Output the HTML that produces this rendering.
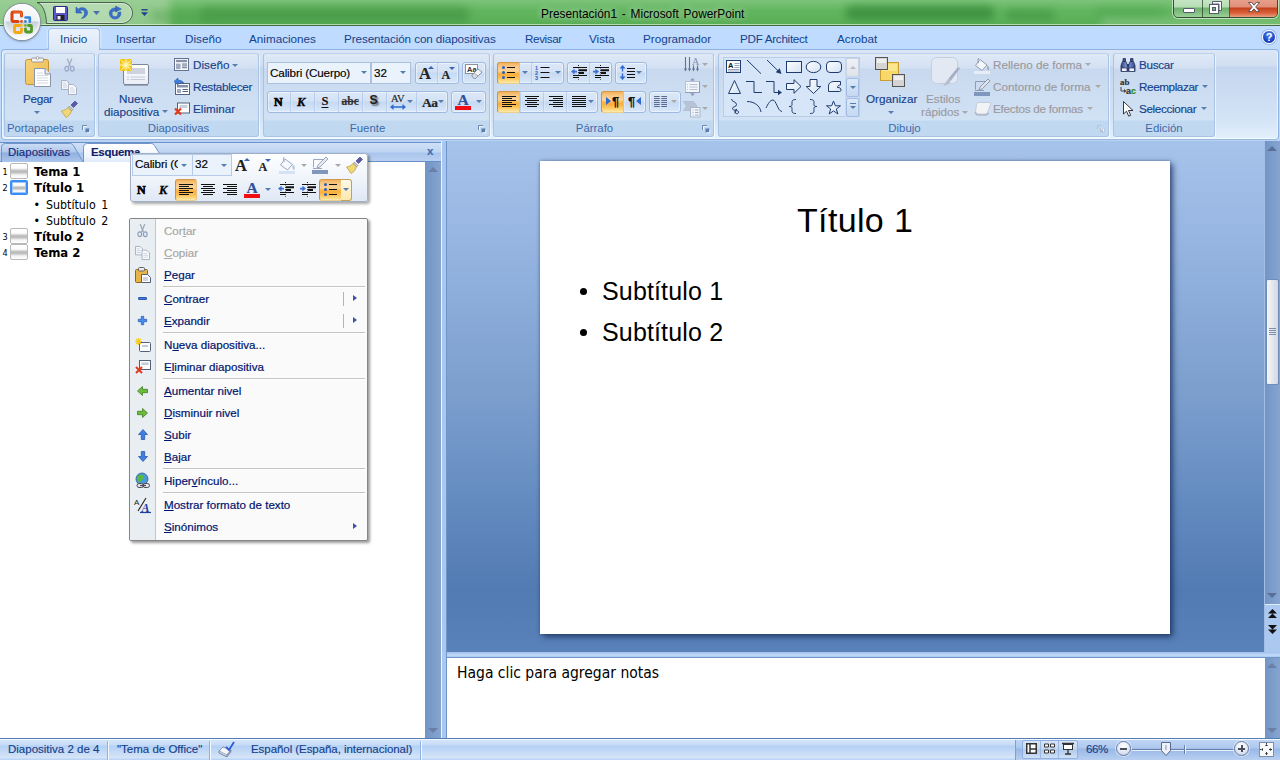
<!DOCTYPE html>
<html lang="es">
<head>
<meta charset="utf-8">
<title>Presentación1 - Microsoft PowerPoint</title>
<style>
html,body{margin:0;padding:0}
body{width:1280px;height:760px;overflow:hidden;position:relative;background:#bfdbff;font-family:"Liberation Sans",sans-serif;font-size:12px;color:#15428b;line-height:1}
.a{position:absolute}
.t{position:absolute;white-space:nowrap;line-height:14px;height:14px}
svg{position:absolute;overflow:visible}
/* title bar */
#titlebar{left:0;top:0;width:1280px;height:26px;background:linear-gradient(180deg,#7cc379 0%,#63b660 40%,#57ad54 100%);overflow:hidden}
#titlebar .blob{position:absolute;border-radius:8px;filter:blur(4px)}
#tabsrow{left:0;top:26px;width:1280px;height:24px;background:#bfdbff}
/* ribbon */
#ribbon{left:1px;top:49px;width:1276px;height:89px;border:1px solid #8db2e3;border-bottom-color:#9db7dc;border-radius:4px;background:linear-gradient(180deg,#dbe7f5 0,#d0dff2 16px,#c4d6ee 17px,#d4e4f7 70px,#e3f0fd 89px);box-shadow:inset 0 -1px 0 #edfbff,inset 1px 0 0 #e8f6ff,inset -1px 0 0 #e8f6ff}
.grp{position:absolute;top:53px;height:82px;border:1px solid #a9c3e4;border-top-color:#bfd2ec;border-radius:3px;background:linear-gradient(180deg,#dfe9f6 0,#d3e0f3 14px,#c8d9ef 15px,#d2e2f5 66px,#c1d8f1 67px,#c1d8f1 100%);box-shadow:1px 1px 0 rgba(255,255,255,.6)}
.grp .lbl{position:absolute;left:0;right:0;bottom:0;height:16px;line-height:17px;text-align:center;color:#3e6aaa;font-size:11.4px}
/* work area */
#work{left:0;top:140px;width:1280px;height:599px;background:#b9d2f3}
#leftpane{left:0;top:162px;width:426px;height:577px;background:#fff}
#stage{left:447px;top:141px;width:818px;height:511px;background:linear-gradient(180deg,#a6c3eb 0%,#96b5e1 20%,#7b9ecd 50%,#5f87bd 75%,#527bb3 88%,#5982ba 100%)}
#slide{left:540px;top:161px;width:630px;height:473px;background:#fff;box-shadow:0 0 3px rgba(30,50,90,.45),3px 3px 6px rgba(20,40,85,.7)}
#notes{left:447px;top:658px;width:818px;height:81px;background:#fff}
#status{left:0;top:739px;width:1280px;height:21px;background:linear-gradient(180deg,#d7e6f9 0,#c7dcf8 6px,#b3d0f5 7px,#d7e5f7 19px,#bad4f7 20px)}

.r{position:absolute;white-space:nowrap;line-height:14px;height:14px;font-size:11.7px;color:#15428b;-webkit-text-stroke:.15px currentColor}
.dis{color:#9a999e}
.dd{position:absolute;width:0;height:0;border-left:3px solid transparent;border-right:3px solid transparent;border-top:3px solid #567db1}
.dd.g{border-top-color:#aba9a8}
.bg{position:absolute;height:20px;border:1px solid #9ebae1;border-radius:3px;background:linear-gradient(180deg,#dce8f7 0,#d4e2f5 9px,#c6d9f1 10px,#d9e8fa 20px);box-shadow:inset 0 0 0 1px rgba(255,255,255,.45)}
.bg i{position:absolute;top:0;width:1px;height:20px;background:linear-gradient(180deg,#c4d6ef,#aec6e8 50%,#c4d6ef);border-right:1px solid rgba(255,255,255,.5)}
.hot{position:absolute;height:20px;border:1px solid;border-color:#d09a4a #e8c07a #ecd08a #c99448;border-radius:3px 0 0 3px;background:linear-gradient(180deg,#f3b05a 0,#f8c57f 3px,#fbd49a 8px,#fbb84f 10px,#fbae38 12px,#fcc966 16px,#fdeaa9 20px)}
.lines{position:absolute;width:14px}
.lines b{display:block;height:1px;background:#111;margin-bottom:1px}
.launch{position:absolute;top:125px;width:8px;height:8px}

.sic{position:absolute;left:10px;width:16px;height:14px;border:1px solid #b8b8b8;border-radius:2px;background:linear-gradient(180deg,#fff 0,#fbfbfb 30%,#bdbdbd 48%,#bdbdbd 60%,#f4f4f4 78%,#fff 100%)}
.sic.sel{border:2px solid #3a8df5;left:10px;width:14px;height:11px;border-radius:2px;top:180px!important;box-shadow:inset 0 0 0 1px #9cc8fb}

#menu{left:129px;top:218px;width:237px;height:321px;border:1px solid #868686;border-radius:2px;background:#fafafa;box-shadow:2px 2px 3px rgba(0,0,0,.4)}
#menu .col{position:absolute;left:0;top:0;width:25px;height:321px;background:#e9eef3;border-right:1px solid #c5c5c5;border-radius:1px 0 0 1px}
#menu .sep{position:absolute;left:33px;right:2px;height:1px;background:#c5c5c5;box-shadow:0 1px 0 #fff}
.m{position:absolute;left:164px;white-space:nowrap;line-height:14px;height:14px;font-size:11.600px;color:#00156e;-webkit-text-stroke:.2px currentColor}
.m.d{color:#a7a7a7}
.m u{text-decoration:underline;text-underline-offset:1px}
.sub{position:absolute;left:353px;width:0;height:0;border-top:3.500px solid transparent;border-bottom:3.500px solid transparent;border-left:4px solid #3d52a4}
</style>
</head>
<body>
<div class="a" id="titlebar">
<div class="blob" style="left:-30px;top:-8px;width:200px;height:40px;background:#a3d19d;opacity:.75"></div>
<div class="blob" style="left:200px;top:7px;width:270px;height:16px;background:#3f9040;opacity:.6"></div>
<div class="blob" style="left:150px;top:10px;width:60px;height:12px;background:#4a9a48;opacity:.4"></div>
<div class="blob" style="left:845px;top:6px;width:150px;height:14px;background:#368a3a;opacity:.8"></div>
<div class="blob" style="left:1005px;top:10px;width:50px;height:10px;background:#3f9242;opacity:.7"></div>
<div class="blob" style="left:1095px;top:8px;width:70px;height:14px;background:#4ea650;opacity:.6"></div>
<div class="blob" style="left:1100px;top:18px;width:200px;height:10px;background:#8cc888;opacity:.7"></div>
<div class="a" style="left:0;top:25px;width:1280px;height:1px;background:#44693f"></div>
<div class="a" style="left:0;top:24px;width:1280px;height:1px;background:rgba(235,250,232,.62)"></div>
<div class="t" style="left:541px;top:7px;color:#000;font-size:11.900px;word-spacing:1.500px;text-shadow:0 0 6px rgba(255,255,255,.55),0 0 10px rgba(255,255,255,.4)">Presentación1 - Microsoft PowerPoint</div>
<!-- quick access toolbar -->
<svg style="left:30px;top:0" width="110" height="25" viewBox="30 0 110 25"><path d="M37 2.500C42.500 4 46 12 46.500 23.500H122A10.500 10.500 0 0 0 122 2.500Z" fill="rgba(255,255,255,.3)" stroke="rgba(50,70,55,.8)" stroke-width="1"/><path d="M40 3.500H122A9.500 9.500 0 0 1 122 22.500H47.500" fill="none" stroke="rgba(255,255,255,.35)" stroke-width="1"/></svg>
<svg style="left:53px;top:6px" width="15" height="15" viewBox="0 0 15 15"><rect x=".5" y=".5" width="14" height="14" rx="1" fill="#5a55c8" stroke="#2d2a86"/><rect x="3" y="1" width="9" height="6" fill="#fff"/><rect x="3.5" y="9" width="8" height="5" fill="#222"/><rect x="4.5" y="10" width="3" height="3.5" fill="#e8e8f8"/></svg>
<svg style="left:75px;top:6px" width="14" height="14" viewBox="0 0 14 14"><path d="M1 1 L1 7 L7 7 L4.8 4.8 C7.2 3 10.2 4.6 9.6 8 C9.2 10 7.8 11.4 6.4 12.4 C10.2 12 13 9.4 12.4 5.8 C11.6 1.6 6.4 .4 3.2 3.2 Z" fill="#3a6fd0" stroke="#2a56a8" stroke-width=".6"/></svg>
<svg style="left:93px;top:11px" width="7" height="4" viewBox="0 0 7 4"><path d="M0 0h7L3.5 4z" fill="#4a6fb0"/></svg>
<svg style="left:108px;top:6px" width="14" height="14" viewBox="0 0 14 14"><path d="M7.6 0 L7.6 6 L13.4 3 Z M9 2.2 C4 .8 .6 4.6 1.4 8.6 C2.2 12.6 7 14.4 10.4 12 C13 10.2 13.2 7.4 12.6 5.8 L9.8 6.6 C10.4 8.4 9.6 9.8 8.4 10.4 C6.4 11.4 4.2 10 4 8 C3.8 5.8 6 4.4 8.4 5 Z" fill="#3a6fd0" stroke="#2a56a8" stroke-width=".5"/></svg>
<svg style="left:140.500px;top:8.500px" width="7" height="8" viewBox="0 0 8 9"><rect x=".5" y="0" width="7" height="1.6" fill="#1f3f8f"/><path d="M0 3.6h8L4 8z" fill="#1f3f8f"/></svg>
<!-- window controls -->
<div class="a" style="left:1173px;top:-5px;width:103px;height:21px;border:1px solid rgba(40,50,40,.8);border-radius:0 0 5px 5px;box-shadow:0 0 0 1px rgba(255,255,255,.55);overflow:hidden">
 <div class="a" style="left:0;top:0;width:28px;height:21px;background:linear-gradient(180deg,rgba(255,255,255,.6) 0,rgba(255,255,255,.5) 11px,rgba(120,170,120,.55) 12px,rgba(200,230,200,.5) 21px);border-right:1px solid rgba(40,60,40,.7)"></div>
 <div class="a" style="left:29px;top:0;width:26px;height:21px;background:linear-gradient(180deg,rgba(255,255,255,.6) 0,rgba(255,255,255,.5) 11px,rgba(120,170,120,.55) 12px,rgba(200,230,200,.5) 21px);border-right:1px solid rgba(40,60,40,.7)"></div>
 <div class="a" style="left:56px;top:0;width:47px;height:21px;background:linear-gradient(180deg,#e9a995 0,#e08f78 11px,#c4401c 12px,#d9603a 17px,#e8a080 21px)"></div>
 <div class="a" style="left:9px;top:12px;width:10px;height:3px;background:#fff;border:1px solid #555c70;border-radius:1px"></div>
 <svg style="left:35px;top:5px" width="13" height="13" viewBox="0 0 13 13"><path d="M3.5 .5h9v9h-2.5v-6.5h-6.5z" fill="#fff" stroke="#555c70"/><rect x=".5" y="3.5" width="9" height="9" fill="#fff" stroke="#555c70"/><rect x="3.5" y="6.500" width="3" height="3" fill="#7aa87a" stroke="#555c70"/></svg>
 <svg style="left:74px;top:6px" width="12" height="10" viewBox="0 0 12 10"><path d="M.5 .5h3.2L6 3.200 8.300 .5h3.200L7.700 5l3.800 4.500H8.300L6 6.800 3.700 9.500H.5L4.300 5z" fill="#fff" stroke="#5a4a50" stroke-width=".9"/></svg>
</div>
</div>
<div class="a" id="tabsrow">
<div class="a" style="left:48px;top:2px;width:50px;height:22px;border:1px solid #a3c0e8;border-bottom:none;border-radius:4px 4px 0 0;background:linear-gradient(180deg,#eaf2fc,#dde8f6);box-shadow:0 0 2px 1px #d9e9fd"></div>
<div class="t" style="left:60px;top:6px;font-size:11.7px">Inicio</div>
<div class="t" style="left:116px;top:6px;font-size:11.7px">Insertar</div>
<div class="t" style="left:185px;top:6px;font-size:11.7px">Diseño</div>
<div class="t" style="left:249px;top:6px;font-size:11.7px">Animaciones</div>
<div class="t" style="left:344px;top:6px;font-size:11.7px;letter-spacing:-.1px">Presentación con diapositivas</div>
<div class="t" style="left:525px;top:6px;font-size:11.7px;letter-spacing:-.4px">Revisar</div>
<div class="t" style="left:589px;top:6px;font-size:11.7px">Vista</div>
<div class="t" style="left:643px;top:6px;font-size:11.7px">Programador</div>
<div class="t" style="left:740px;top:6px;font-size:11.7px;letter-spacing:-.3px">PDF Architect</div>
<div class="t" style="left:837px;top:6px;font-size:11.7px">Acrobat</div>
<div class="a" style="left:1262px;top:4px;width:12px;height:12px;border-radius:50%;background:radial-gradient(circle at 50% 30%,#5d8df0,#1a44c4 60%,#1230a0);border:1px solid #fff;box-shadow:0 0 0 1px #9fb8e8;color:#fff;font-weight:bold;font-size:11px;line-height:12px;text-align:center">?</div>
</div>
<!-- office button -->
<div class="a" style="left:4px;top:4px;width:36px;height:36px;border-radius:50%;background:linear-gradient(180deg,#fdfdfe 0,#eef0f4 46%,#c9d0dc 50%,#e4e8ef 75%,#fff 100%);box-shadow:0 0 0 1px #8a94a6,0 1px 3px rgba(0,0,0,.5),inset 0 0 3px 1px rgba(255,255,255,.9)"></div>
<svg style="left:4px;top:4px" width="36" height="36" viewBox="4 4 36 36" fill="none" stroke-linecap="round" stroke-linejoin="round">
<path d="M21.500 16v-2.500a1.500 1.500 0 0 0-1.500-1.500h-6.500a1.500 1.500 0 0 0-1.500 1.500v6.500a1.500 1.500 0 0 0 1.500 1.500h4.500" stroke="#d8420c" stroke-width="3"/>
<path d="M21.500 16v-2.500a1.500 1.500 0 0 0-1.500-1.500h-6.500" stroke="#f0702c" stroke-width="1.200"/>
<path d="M25.500 17.500h4.300v4.300" stroke="#2f86dc" stroke-width="2.600"/>
<path d="M20 25.500h-4.500a1 1 0 0 0-1 1v5a1 1 0 0 0 1 1h5a1 1 0 0 0 1-1v-2.500" stroke="#f4a814" stroke-width="2.800"/>
<path d="M25.500 29v2a1 1 0 0 0 1 1h4a1 1 0 0 0 1-1v-4.500a1 1 0 0 0-1-1h-2" stroke="#4f9a28" stroke-width="2.800"/>
<circle cx="21.500" cy="21.500" r="1.400" fill="#e8501c"/><circle cx="25.400" cy="21.500" r="1.400" fill="#2f86dc"/><circle cx="21.500" cy="25.400" r="1.400" fill="#f6b432"/><circle cx="25.400" cy="25.400" r="1.400" fill="#6cb23a"/>
</svg>
<div class="a" id="ribbon"></div>
<div class="a" style="left:49px;top:49px;width:50px;height:2px;background:#dde8f6"></div>
<div class="a" style="left:46px;top:47px;width:3px;height:3px;border-radius:0 0 3px 0;border-right:1px solid #a3c0e8;border-bottom:1px solid #a3c0e8;box-sizing:border-box"></div>
<div class="a" style="left:99px;top:47px;width:3px;height:3px;border-radius:0 0 0 3px;border-left:1px solid #a3c0e8;border-bottom:1px solid #a3c0e8;box-sizing:border-box"></div>
<!-- ===== ribbon groups ===== -->
<div class="grp" style="left:4px;width:89px"><div class="lbl" style="text-align:left;padding-left:2px;letter-spacing:-.05px">Portapapeles</div></div>
<div class="grp" style="left:98px;width:159px"><div class="lbl" style="padding-right:0">Diapositivas</div></div>
<div class="grp" style="left:263px;width:225px"><div class="lbl" style="padding-right:18px">Fuente</div></div>
<div class="grp" style="left:493px;width:219px"><div class="lbl" style="padding-right:18px">Párrafo</div></div>
<div class="grp" style="left:718px;width:389px"><div class="lbl" style="padding-right:18px">Dibujo</div></div>
<div class="grp" style="left:1113px;width:100px"><div class="lbl">Edición</div></div>
<!--G1-->
<svg style="left:24px;top:56px" width="28" height="32" viewBox="0 0 28 32">
<defs><linearGradient id="cb" x1="0" y1="0" x2="1" y2="1"><stop offset="0" stop-color="#f7d27c"/><stop offset="1" stop-color="#eeb94e"/></linearGradient></defs>
<rect x="1.500" y="3.500" width="23" height="25" rx="2" fill="url(#cb)" stroke="#c2943a"/>
<rect x="7.500" y="2" width="12" height="4" rx="1" fill="#f2f2f2" stroke="#8c8c8c" stroke-width=".8"/><circle cx="13.500" cy="2" r="1.400" fill="#fff" stroke="#8c8c8c" stroke-width=".7"/>
<path d="M10.500 12.500h10.500l5.500 5.500v12.500h-16z" fill="#fdfdfe" stroke="#8a96a8"/><path d="M21 12.500v5.500h5.500" fill="#e4e9f1" stroke="#8a96a8"/>
<path d="M13 17h6M13 19.500h11M13 22h11M13 24.500h11M13 27h11" stroke="#d0d6e0" stroke-width=".9"/></svg>
<div class="r" style="left:23px;top:92px;letter-spacing:-.3px">Pegar</div>
<div class="dd" style="left:34px;top:111px"></div>
<svg style="left:64px;top:58px" width="11" height="15" viewBox="0 0 12 16"><path d="M3.500 .5L7 9M8.500 .5L5 9" stroke="#a9b2c4" stroke-width="1.500" fill="none"/><ellipse cx="3" cy="11.500" rx="2" ry="2.600" fill="none" stroke="#9aa8c8" stroke-width="1.400"/><ellipse cx="9" cy="11.500" rx="2" ry="2.600" fill="none" stroke="#9aa8c8" stroke-width="1.400"/></svg>
<svg style="left:61px;top:80px" width="16" height="15" viewBox="0 0 16 15"><path d="M.5 .5h5l2.500 2.500v6.500h-7.500z" fill="#f4f6fa" stroke="#a6b0c2"/><path d="M7.500 4.500h5l3 3v7h-8z" fill="#fafbfd" stroke="#a6b0c2"/><path d="M9 8h4M9 10h5M9 12h5M2 3h3M2 5h4M2 7h4" stroke="#c2cad8" stroke-width=".8"/></svg>
<svg style="left:61px;top:100px" width="18" height="18" viewBox="0 0 18 18"><path d="M10 5l4-4 2.500 2.500-4 4z" fill="#5c5aa8" stroke="#3c3a80" stroke-width=".6"/><path d="M8.500 6l3.500 3.500-1.500 1.500-3.500-3.500z" fill="#c8c8d0" stroke="#777" stroke-width=".5"/><path d="M7 7.500l3.500 3.500c-1 3-3 5.500-5.500 6.500l-4.500-6.500c2.500-.5 5-1.500 6.500-3.500z" fill="#f0d878" stroke="#b89a30" stroke-width=".7"/></svg>
<svg class="launch" style="left:82px" viewBox="0 0 8 8"><path d="M.5 5V.5H5" fill="none" stroke="#6f88b0"/><path d="M1.500 5V1.500H5" fill="none" stroke="#fff" stroke-opacity=".8"/><path d="M3.500 3.500h4v4h-4z" fill="#5c7cb0"/><path d="M4.500 7.800h3.300V4.500" fill="none" stroke="#fff" stroke-width=".9"/></svg>
<!--G2-->
<svg style="left:119px;top:57px" width="32" height="30" viewBox="0 0 32 30">
<defs><radialGradient id="sun"><stop offset="0" stop-color="#fffef0"/><stop offset=".35" stop-color="#fbe46a"/><stop offset="1" stop-color="#f1c40f"/></radialGradient><linearGradient id="sl" x1="0" y1="0" x2="0" y2="1"><stop offset="0" stop-color="#ffffff"/><stop offset="1" stop-color="#e9edf5"/></linearGradient></defs>
<rect x="4.500" y="7.500" width="25" height="20" rx="1.500" fill="url(#sl)" stroke="#7b869a"/><path d="M5 28.500h24" stroke="#9aa4b8" stroke-width="1"/><rect x="8" y="11" width="18" height="6" fill="#cfd3df"/><path d="M8 20h2M11.500 20h14.500M8 22.500h2M11.500 22.500h14.500" stroke="#c4cad8" stroke-width="1"/>
<rect x="1" y="2" width="12" height="12" fill="url(#sun)"/><path d="M7 2v12M1 8h12M1.500 2.500l11 11M12.500 2.500l-11 11" stroke="#fff8c0" stroke-width=".9" opacity=".9"/></svg>
<div class="r" style="left:119px;top:92px">Nueva</div>
<div class="r" style="left:104px;top:105px">diapositiva</div>
<div class="dd" style="left:162px;top:110px"></div>
<svg style="left:174px;top:58px" width="15" height="13" viewBox="0 0 16 14"><rect x=".5" y=".5" width="15" height="13" fill="#fdfdfe" stroke="#5a6a8a"/><rect x="2" y="2" width="12" height="2.500" fill="#8692aa"/><rect x="2" y="6" width="5" height="6" fill="#a0aac0"/><path d="M8.500 6.500h5.500M8.500 8.500h5.500M8.500 10.500h5.500" stroke="#54627c"/></svg>
<div class="r" style="left:193px;top:58px">Diseño</div><div class="dd" style="left:232px;top:64px"></div>
<svg style="left:174px;top:78px" width="17" height="18" viewBox="0 0 17 18"><rect x="1.500" y="5.500" width="14" height="11" fill="#fdfdfe" stroke="#54627c"/><rect x="3" y="7" width="11" height="2.500" fill="#8692aa"/><rect x="3" y="11" width="4" height="4" fill="#a0aac0"/><path d="M8.500 11.500h5.500M8.500 13.500h5.500" stroke="#54627c"/><path d="M0 3.500l4-3.500v2.200c3 0 5 1 6 3.500-2-1.300-3.500-1.500-6-1.200v2.500z" fill="#3f7fe0" stroke="#1f4fb0" stroke-width=".6"/></svg>
<div class="r" style="left:193px;top:80px;letter-spacing:-.3px">Restablecer</div>
<svg style="left:174px;top:101px" width="17" height="17" viewBox="0 0 17 17"><rect x="3.500" y="2" width="12" height="10" fill="#fdfdfe" stroke="#54627c"/><rect x="5.500" y="4" width="8" height="3" fill="#c8cfdc"/><path d="M1 7.500l6 6M7 7.500l-6 6" stroke="#e03a1c" stroke-width="2.200"/></svg>
<div class="r" style="left:193px;top:102px">Eliminar</div>
<!--G3 Fuente-->
<div class="a" style="left:267px;top:62px;width:102px;height:20px;border:1px solid #abc1de;background:#eaf2fb"></div>
<div class="r" style="left:270px;top:66px;color:#000;letter-spacing:-.15px">Calibri (Cuerpo)</div><div class="dd" style="left:361px;top:71px"></div>
<div class="a" style="left:371px;top:62px;width:38px;height:20px;border:1px solid #abc1de;background:#eaf2fb"></div>
<div class="r" style="left:374px;top:66px;color:#000">32</div><div class="dd" style="left:400px;top:71px"></div>
<div class="bg" style="left:415px;top:62px;width:42px"><i style="left:21px"></i></div>
<div class="r" style="left:419px;top:65px;font:bold 16.500px/18px 'Liberation Serif',serif;color:#222;height:18px">A</div>
<div class="a" style="left:428px;top:66px;width:0;height:0;border-left:3px solid transparent;border-right:3px solid transparent;border-bottom:3px solid #3a62b0"></div>
<div class="r" style="left:441.500px;top:68px;font:bold 12px/14px 'Liberation Serif',serif;color:#222">A</div>
<div class="a" style="left:449px;top:67px;width:0;height:0;border-left:3px solid transparent;border-right:3px solid transparent;border-top:3px solid #3a62b0"></div>
<div class="bg" style="left:462px;top:62px;width:22px"></div>
<svg style="left:465px;top:64px" width="18" height="16" viewBox="0 0 18 16"><rect x=".5" y=".5" width="12" height="9" fill="#fff" stroke="#8a8f9c"/><text x="2" y="8" font-family="Liberation Sans, sans-serif" font-size="7.500" font-weight="bold" fill="#333">Aa</text><path d="M7 11l6-6 4 3-6 6c-1.500 1.200-3.500 0-4-3z" fill="#f4f4f8" stroke="#7a8090" stroke-width=".8"/><path d="M11 14c-1.500 1.200-3.500 0-4-3l2-2 4 3z" fill="#d8dce8" stroke="#7a8090" stroke-width=".6"/></svg>
<div class="bg" style="left:267px;top:91px;width:179px"><i style="left:22px"></i><i style="left:46px"></i><i style="left:70px"></i><i style="left:94px"></i><i style="left:118px"></i><i style="left:148px"></i></div>
<div class="r" style="left:274px;top:95px;font:bold 12px/15px 'Liberation Serif',serif;color:#000;height:15px;-webkit-text-stroke:.7px #000">N</div>
<div class="r" style="left:297px;top:95px;font:italic bold 12.500px/15px 'Liberation Serif',serif;color:#000;height:15px;-webkit-text-stroke:.3px #000">K</div>
<div class="r" style="left:321.500px;top:94px;font:bold 12.500px/15px 'Liberation Serif',serif;color:#111;height:15px;text-decoration:underline;text-underline-offset:1.500px">S</div>
<div class="r" style="left:341.500px;top:94px;font:bold 11.500px/14px 'Liberation Serif',serif;color:#333;text-decoration:line-through">abc</div>
<div class="r" style="left:369.500px;top:93px;font:bold 12.500px/15px 'Liberation Sans',sans-serif;color:#222;height:15px;text-shadow:1.500px 1.500px 1.500px rgba(0,0,0,.5)">S</div>
<div class="r" style="left:391px;top:93px;font:10.500px/12px 'Liberation Serif',serif;color:#222;letter-spacing:-.3px">AV</div>
<svg style="left:390px;top:104px" width="16" height="6" viewBox="0 0 16 6"><path d="M0 3l3.500-3v2.300h9v-2.300l3.500 3-3.500 3v-2.300h-9v2.300z" fill="#2f6ad0"/></svg>
<div class="dd" style="left:407px;top:100px"></div>
<div class="r" style="left:422px;top:95px;font:bold 13.500px/16px 'Liberation Serif',serif;color:#222;height:16px;letter-spacing:-.5px">Aa</div>
<div class="dd" style="left:438px;top:100px"></div>
<div class="bg" style="left:451px;top:91px;width:33px"></div>
<div class="r" style="left:457.500px;top:91px;font:bold 15.500px/17px 'Liberation Serif',serif;color:#2f4f9f;height:17px">A</div>
<div class="a" style="left:455px;top:106px;width:16px;height:4px;background:#f00c12"></div>
<div class="dd" style="left:476px;top:100px"></div>
<svg class="launch" style="left:478px" viewBox="0 0 8 8"><path d="M.5 5V.5H5" fill="none" stroke="#6f88b0"/><path d="M1.500 5V1.500H5" fill="none" stroke="#fff" stroke-opacity=".8"/><path d="M3.500 3.500h4v4h-4z" fill="#5c7cb0"/><path d="M4.500 7.800h3.300V4.500" fill="none" stroke="#fff" stroke-width=".9"/></svg>
<!--G4 Parrafo-->
<div class="bg" style="left:497px;top:62px;width:65px"><i style="left:33px"></i></div>
<div class="hot" style="left:497px;top:62px;width:21px"></div>
<svg style="left:501px;top:65px" width="15" height="15" viewBox="0 0 15 15"><circle cx="2.500" cy="2.500" r="1.500" fill="#2f5fc0"/><circle cx="2.500" cy="7.500" r="1.500" fill="#2f5fc0"/><circle cx="2.500" cy="12.500" r="1.500" fill="#2f5fc0"/><path d="M6 2.500h8M6 7.500h8M6 12.500h8" stroke="#111" stroke-width="1.100"/></svg>
<div class="dd" style="left:522px;top:71px"></div>
<svg style="left:535px;top:65px" width="15" height="15" viewBox="0 0 15 15"><text x="0" y="4.500" font-size="5.500" font-weight="bold" font-family="Liberation Sans, sans-serif" fill="#2f5fc0">1</text><text x="0" y="9.500" font-size="5.500" font-weight="bold" font-family="Liberation Sans, sans-serif" fill="#2f5fc0">2</text><text x="0" y="14.500" font-size="5.500" font-weight="bold" font-family="Liberation Sans, sans-serif" fill="#2f5fc0">3</text><path d="M5.500 2.500h9M5.500 7.500h9M5.500 12.500h9" stroke="#111" stroke-width="1.100"/></svg>
<div class="dd" style="left:555px;top:71px"></div>
<div class="bg" style="left:567px;top:62px;width:43px"><i style="left:21px"></i></div>
<svg style="left:571px;top:65px" width="17" height="15" viewBox="0 0 17 15"><path d="M2 2.500h14M2 10.500h14M2 12.500h6" stroke="#111" stroke-width="1"/><path d="M8 5.200h8M8 8h5" stroke="#111" stroke-width="1.900"/><path d="M7.500 0v15" stroke="#111" stroke-width="1" stroke-dasharray="1 1.400"/><path d="M0 6.600l3.600-2.800v2h2.400v1.600h-2.400v2z" fill="#3a6fd8"/></svg>
<svg style="left:593px;top:65px" width="17" height="15" viewBox="0 0 17 15"><path d="M2 2.500h14M2 10.500h14M2 12.500h6" stroke="#111" stroke-width="1"/><path d="M8 5.200h8M8 8h5" stroke="#111" stroke-width="1.900"/><path d="M7.500 0v15" stroke="#111" stroke-width="1" stroke-dasharray="1 1.400"/><path d="M6 6.600l-3.600-2.800v2h-2.400v1.600h2.400v2z" fill="#3a6fd8"/></svg>
<div class="bg" style="left:615px;top:62px;width:30px"></div>
<svg style="left:619px;top:65px" width="17" height="15" viewBox="0 0 17 15"><path d="M3.500 0l3 3.500h-2.300v3h-1.400v-3h-2.300zM3.500 15l3-3.500h-2.300v-3h-1.400v3h-2.300z" fill="#2f6ad0"/><path d="M8 3.500h8M8 6.500h8M8 9.500h8M8 12.500h8" stroke="#111" stroke-width="1.100"/></svg>
<div class="dd" style="left:636px;top:71px"></div>
<div class="bg" style="left:497px;top:91px;width:99px"><i style="left:22px"></i><i style="left:45px"></i><i style="left:68px"></i></div>
<div class="hot" style="left:497px;top:91px;width:21px"></div>
<div class="lines" style="left:502px;top:96px"><b></b><b style="width:10px"></b><b></b><b style="width:10px"></b><b></b><b style="width:10px"></b></div>
<div class="lines" style="left:525px;top:96px"><b></b><b style="width:10px;margin-left:2px"></b><b></b><b style="width:10px;margin-left:2px"></b><b></b><b style="width:10px;margin-left:2px"></b></div>
<div class="lines" style="left:549px;top:96px"><b></b><b style="width:10px;margin-left:4px"></b><b></b><b style="width:10px;margin-left:4px"></b><b></b><b style="width:10px;margin-left:4px"></b></div>
<div class="lines" style="left:572px;top:96px"><b></b><b></b><b></b><b></b><b></b><b></b></div>
<div class="dd" style="left:588px;top:100px"></div>
<div class="bg" style="left:601px;top:91px;width:43px"><i style="left:21px"></i></div>
<div class="hot" style="left:601px;top:91px;width:21px"></div>
<div class="a" style="left:606px;top:97px;width:0;height:0;border-top:4px solid transparent;border-bottom:4px solid transparent;border-left:5px solid #2f6ad0"></div>
<div class="r" style="left:612px;top:94px;font:bold 13px/15px 'Liberation Sans',sans-serif;color:#111;height:15px">¶</div>
<div class="r" style="left:628px;top:94px;font:bold 13px/15px 'Liberation Sans',sans-serif;color:#111;height:15px">¶</div>
<div class="a" style="left:636px;top:97px;width:0;height:0;border-top:4px solid transparent;border-bottom:4px solid transparent;border-right:5px solid #2f6ad0"></div>
<div class="bg" style="left:649px;top:91px;width:30px"></div>
<svg style="left:654px;top:96px" width="14" height="12" viewBox="0 0 14 12"><path d="M0 .5h5.700M7.300 .5h5.700M0 2.500h5.700M7.300 2.500h5.700M0 4.500h5.700M7.300 4.500h5.700M0 6.500h5.700M7.300 6.500h5.700M0 8.500h5.700M7.300 8.500h5.700M0 10.500h5.700M7.300 10.500h5.700" stroke="#5a6a8e" stroke-width="1.100"/></svg>
<div class="dd g" style="left:671px;top:100px"></div>
<svg style="left:684px;top:56px" width="16" height="17" viewBox="0 0 16 17"><path d="M1.500 1v13M5.500 1v13M9.500 9.500v4.500M13.500 9.500v4.500" stroke="#5f7299" stroke-width="1.100"/><path d="M0 12.500h3l-1.500 3zM4 12.500h3l-1.500 3zM8 12.500h3l-1.500 3zM12 12.500h3l-1.500 3z" fill="#5f7299"/><text x="8" y="8.500" font-size="10" font-family="Liberation Serif, serif" fill="#7f8fae">A</text></svg>
<div class="dd g" style="left:702px;top:63px"></div>
<svg style="left:684px;top:78px" width="17" height="18" viewBox="0 0 17 18"><path d="M8.500 0l2.500 2.500h-5zM8.500 18l2.500-2.500h-5z" fill="#8a9ab8"/><path d="M8.500 2v2M8.500 14v2" stroke="#8a9ab8"/><rect x="1.500" y="3.500" width="14" height="11" fill="#f3f6fb" stroke="#b4c0d4"/><path d="M1.500 14.500h14v-11" fill="none" stroke="#8a9ab8"/><path d="M3 6.500h1M5.500 6.500h8M3 9h1M5.500 9h8M3 11.500h1M5.500 11.500h8" stroke="#b0bace" stroke-width=".9"/></svg>
<div class="dd g" style="left:702px;top:85px"></div>
<svg style="left:683px;top:100px" width="18" height="18" viewBox="0 0 18 18"><path d="M.5 1.500h10l3.500 4.500-3.500 4.500h-10l3-4.500z" fill="#b9c3d6" stroke="#a6b2c8" stroke-width=".6"/><rect x="7.500" y="7.500" width="9.500" height="9.500" fill="#f1f4f9" stroke="#aab6ca"/><path d="M9.500 10h1M12 10h3.500M9.500 12.500h1M12 12.500h3.500M9.500 15h1M12 15h3.500" stroke="#9aa6bc" stroke-width=".9"/></svg>
<div class="dd g" style="left:702px;top:107px"></div>
<svg class="launch" style="left:702px" viewBox="0 0 8 8"><path d="M.5 5V.5H5" fill="none" stroke="#6f88b0"/><path d="M1.500 5V1.500H5" fill="none" stroke="#fff" stroke-opacity=".8"/><path d="M3.500 3.500h4v4h-4z" fill="#5c7cb0"/><path d="M4.500 7.800h3.300V4.500" fill="none" stroke="#fff" stroke-width=".9"/></svg>
<!--G5 Dibujo-->
<div class="a" style="left:723px;top:57px;width:135px;height:58px;border:1px solid #b9cde9;background:#d7e5f8"></div>
<div class="a" style="left:845px;top:58px;width:14px;height:59px;background:#c6daf3"></div>
<div class="a" style="left:846px;top:58px;width:13px;height:19px;border:1px solid #c8d4e4;border-radius:2px;background:linear-gradient(180deg,#eef1f5,#dfe3ea);box-sizing:border-box"></div>
<div class="a" style="left:846px;top:78px;width:13px;height:19px;border:1px solid #a3bde3;border-radius:2px;background:linear-gradient(180deg,#dbe8f8,#c4d8f1);box-sizing:border-box"></div>
<div class="a" style="left:846px;top:98px;width:13px;height:19px;border:1px solid #a3bde3;border-radius:2px;background:linear-gradient(180deg,#dbe8f8,#c4d8f1);box-sizing:border-box"></div>
<div class="a" style="left:849.500px;top:66px;width:0;height:0;border-left:3px solid transparent;border-right:3px solid transparent;border-bottom:3px solid #b4bcc8"></div>
<div class="dd" style="left:849.500px;top:86px"></div>
<div class="a" style="left:849.500px;top:103px;width:6px;height:1px;background:#567db1"></div><div class="dd" style="left:849.500px;top:106px"></div>
<svg style="left:725px;top:58px" width="120" height="58" viewBox="0 0 120 58" fill="none" stroke="#1e3c6e" stroke-width="1">
<defs><linearGradient id="sh" x1="0" y1="0" x2="1" y2="1"><stop offset="0" stop-color="#ffffff"/><stop offset="1" stop-color="#d3e2f4"/></linearGradient></defs>
<rect x="1.500" y="2.500" width="14" height="12" fill="#fff"/><text x="3" y="10" font-size="7.500" font-weight="bold" font-family="Liberation Sans, sans-serif" fill="#111" stroke="none">A</text><path d="M9.500 5.500h5M9.500 7.500h5M9.500 9.500h5M3 11.500h11.500M3 13h11.500" stroke="#6a7aa8" stroke-width=".7"/>
<path d="M22 2l14 13.700"/><path d="M42 2l12.500 12.200"/><path d="M56.500 16l-1.800-5.800-4 4z" fill="#1e3c6e" stroke="none"/>
<rect x="61.500" y="3.500" width="15" height="11" fill="url(#sh)"/><ellipse cx="88.500" cy="9" rx="7.300" ry="5.600" fill="url(#sh)"/><rect x="101.500" y="3.500" width="15" height="11" rx="3.500" fill="url(#sh)"/>
<path d="M9.500 22.500l6 13h-12z" fill="url(#sh)"/><path d="M21 23.500h8v11h8"/><path d="M41 23.500h8v11h6"/><path d="M57 34.500l-4-2.800v5.600z" fill="#1e3c6e" stroke="none"/>
<path d="M61.500 25.500h7.500v-3.800l7 6.800-7 6.800v-3.800h-7.500z" fill="url(#sh)"/><path d="M85 21.500h7v7h3.800l-7.300 7-7.300-7h3.800z" fill="url(#sh)"/>
<path d="M103.500 33.500v-5.500c0-3 2.500-4.500 5.500-4.500h6.500v3.500c-2 0-3 1-3 2.500 2 0 3.500 .5 3.500 2.500 0 1-.5 1.500-1.500 1.500z" fill="url(#sh)"/>
<path d="M6.500 41c0 3 5 2.500 5 5.500s-4 1.500-4 4 6 1 6 3.500-3 2-3.500 0c-.3-1.500.5-3 2-2.500M11 52.500l-1 3"/><path d="M22 43.500c7 0 13 4 14 10.500"/><path d="M41 50c2-4 4-8 7-8s5 11.500 9 11.500"/>
<path d="M71 41.500c-4 0-4 1.500-4 3.500s.5 3.500-3 3.500c3.500 0 3 1.500 3 3.500s0 3.500 4 3.500"/><path d="M85 41.500c4 0 4 1.500 4 3.500s-.5 3.500 3 3.500c-3.500 0-3 1.500-3 3.500s0 3.500-4 3.500"/>
<path d="M108.500 43l1.800 4.800h5.200l-4.200 3.200 1.600 5-4.400-3.100-4.400 3.100 1.600-5-4.200-3.200h5.200z" fill="url(#sh)"/>
</svg>
<svg style="left:875px;top:57px" width="32" height="32" viewBox="0 0 32 32"><rect x="5.500" y="5.500" width="18" height="18" fill="#f7d868" stroke="#c8a030"/><rect x="7" y="7" width="15" height="7" fill="#fbe690" stroke="none"/><rect x=".5" y=".5" width="12" height="12" fill="#d4d4d4" stroke="#555"/><rect x="2" y="2" width="9" height="4" fill="#eee"/><rect x="17.500" y="17.500" width="12" height="12" fill="#d4d4d4" stroke="#555"/><rect x="19" y="19" width="9" height="4" fill="#eee"/></svg>
<div class="r" style="left:866px;top:92px">Organizar</div><div class="dd" style="left:888px;top:111px"></div>
<svg style="left:930px;top:57px" width="32" height="32" viewBox="0 0 32 32"><rect x="1.500" y=".5" width="26" height="26" rx="5" fill="#e2e9f3" stroke="#c4cfde"/><path d="M28 10l2 1.500-9 12-2.500-2z" fill="#a4b0c4"/><path d="M18.500 21.500l2.500 2c-1 3-4 5-8 5 2-1.500 3-4 5.500-7z" fill="#b4bece"/></svg>
<div class="r dis" style="left:926px;top:92px">Estilos</div>
<div class="r dis" style="left:921px;top:105px">rápidos</div><div class="dd g" style="left:962px;top:111px"></div>
<svg style="left:974px;top:57px" width="17" height="17" viewBox="0 0 17 17"><path d="M6 2.500l7 5.500-5 5.500-6.500-5z" fill="#f4f6fa" stroke="#8f9bb0"/><path d="M5 1c-1.500 1-1.500 3.500 0 5" fill="none" stroke="#8f9bb0"/><path d="M13.500 8c1.500 1.500 2.500 4 1 5.500-1.500-.5-2-3-1-5.500z" fill="#a4aec0"/><rect x="0" y="14" width="16" height="3" fill="#e8edf5"/></svg>
<div class="r dis" style="left:993px;top:58px">Relleno de forma</div><div class="dd g" style="left:1085px;top:63px"></div>
<svg style="left:974px;top:79px" width="17" height="17" viewBox="0 0 17 17"><path d="M1.500 10.500v-8h10" fill="none" stroke="#8f9bb0"/><path d="M14 0l2 2-8 8-3 1 1-3z" fill="#dfe4ec" stroke="#7f8aa0" stroke-width=".8"/><path d="M1 11.500h9" stroke="#8f9bb0"/><rect x="0" y="13" width="16" height="4" fill="#7f97bd"/></svg>
<div class="r dis" style="left:993px;top:80px">Contorno de forma</div><div class="dd g" style="left:1095px;top:85px"></div>
<svg style="left:974px;top:101px" width="18" height="17" viewBox="0 0 18 17"><path d="M5 1.500h10c1.500 0 2 1 1.500 2l-3 8c-.5 1-1 1.500-2.500 1.500h-8c-1.500 0-2-1-1.500-2l1-8c0-1 1-1.500 2.500-1.500z" fill="#f1f3f7" stroke="#c4cad6"/><path d="M1.500 11c0 1.500 1 3 3 3h7c1.500 0 2.500-1 3-2.500" fill="none" stroke="#b0b8c8" stroke-width="1.500"/></svg>
<div class="r dis" style="left:993px;top:102px;letter-spacing:-.25px">Efectos de formas</div><div class="dd g" style="left:1087px;top:107px"></div>
<svg class="launch" style="left:1097px" viewBox="0 0 8 8"><path d="M.5 4V.5H4" fill="none" stroke="#b4c2d8"/><path d="M3 3h4.500v4.500H3z" fill="#b4c2d8"/><path d="M4 4h2.500v2.500" fill="none" stroke="#fff" stroke-width=".8"/></svg>
<!--G6 Edicion-->
<svg style="left:1120px;top:57px" width="16" height="16" viewBox="0 0 16 16"><defs><linearGradient id="bn" x1="0" y1="0" x2="1" y2="0"><stop offset="0" stop-color="#2c3f7a"/><stop offset=".45" stop-color="#8fa4dc"/><stop offset="1" stop-color="#34488a"/></linearGradient></defs><path d="M3 1.500h2.500v3h-2.500zM10.500 1.500h2.500v3h-2.500z" fill="#3a4f92" stroke="#1e2c58" stroke-width=".7"/><path d="M2.500 4.500h3.500l1.500 4v6h-6.500v-6zM10 4.500h3.500l1.500 4v6h-6.500v-6z" fill="url(#bn)" stroke="#1e2c58" stroke-width=".8"/><rect x="6.800" y="7" width="2.400" height="3" fill="#2a3c78"/><path d="M1.500 11h5.500v3.500h-5.500zM9 11h5.500v3.500h-5.500z" fill="#eef2fc" stroke="#1e2c58" stroke-width=".7"/></svg>
<div class="r" style="left:1139px;top:58px;letter-spacing:-.3px">Buscar</div>
<div class="r" style="left:1120px;top:77px;font:bold 9px/10px 'Liberation Serif',serif;color:#333;height:10px">ab</div>
<div class="r" style="left:1126px;top:86px;font:bold 9px/10px 'Liberation Sans',sans-serif;height:10px"><span style="color:#333">a</span><span style="color:#1f8a1f">c</span></div>
<svg style="left:1120px;top:87px" width="7" height="7" viewBox="0 0 7 7"><path d="M1 0v4h3.500" fill="none" stroke="#444"/><path d="M4 2l2.500 2-2.500 2z" fill="#444"/></svg>
<div class="r" style="left:1139px;top:80px;letter-spacing:-.4px">Reemplazar</div><div class="dd" style="left:1202px;top:85px"></div>
<svg style="left:1123px;top:101px" width="11" height="16" viewBox="0 0 11 16"><path d="M.5 .5v12.500l3-2.800 2.200 5 2-.9-2.200-4.800h4.500z" fill="#fff" stroke="#222" stroke-width=".9"/></svg>
<div class="r" style="left:1139px;top:102px;letter-spacing:-.35px">Seleccionar</div><div class="dd" style="left:1201px;top:107px"></div>
<div class="a" id="work"></div>
<!-- left pane tab strip -->
<div class="a" style="left:0;top:142px;width:441px;height:18px;background:linear-gradient(180deg,#cfe0f7 0,#c0d5f2 9px,#aac5ec 10px,#b9d0f1 18px);border-top:1px solid #6a93cc;border-bottom:2px solid #6690cb"></div>
<svg style="left:0;top:143px" width="170" height="20" viewBox="0 0 170 20">
<defs><linearGradient id="tg1" x1="0" y1="0" x2="0" y2="1"><stop offset="0" stop-color="#cddef6"/><stop offset=".45" stop-color="#afc8ec"/><stop offset=".5" stop-color="#90b0e0"/><stop offset="1" stop-color="#acc6ed"/></linearGradient>
<linearGradient id="tg2" x1="0" y1="0" x2="0" y2="1"><stop offset="0" stop-color="#ffffff"/><stop offset=".6" stop-color="#f2f7fe"/><stop offset="1" stop-color="#dde9fa"/></linearGradient></defs>
<path d="M1.500 19.500v-15c0-2.500 1.500-4 4-4h64c2 0 3 .5 4 2l10 17z" fill="url(#tg1)" stroke="#6f94c8"/>
<path d="M83.500 20v-15.500c0-2.500 1.500-4 4-4h63c2 0 3 .5 4 2l11 17.500z" fill="url(#tg2)" stroke="#6f94c8"/>
<path d="M84 20h81" stroke="#e0ebfa" stroke-width="1.500"/>
</svg>
<div class="r" style="left:8px;top:145px;font-size:11.5px;color:#1a2a7a">Diapositivas</div>
<div class="r" style="left:91px;top:145px;font-size:11.5px;color:#10206a;font-weight:bold;letter-spacing:-.3px">Esquema</div>
<div class="r" style="left:427px;top:144px;font:bold 11.500px/14px 'Liberation Sans',sans-serif;color:#3f6cb0">x</div>
<div class="a" id="leftpane"></div>
<!-- left scrollbar -->
<div class="a" style="left:425px;top:162px;width:16px;height:577px;background:linear-gradient(90deg,#7195c6,#87a4cf)"></div>
<div class="a" style="left:428px;top:167px;width:0;height:0;border-left:5px solid transparent;border-right:5px solid transparent;border-bottom:5px solid #6a7ea8"></div>
<div class="a" style="left:428px;top:728px;width:0;height:0;border-left:5px solid transparent;border-right:5px solid transparent;border-top:5px solid #6a7ea8"></div>
<!-- splitter -->
<div class="a" style="left:441px;top:141px;width:1px;height:598px;background:#eef5ff"></div>
<div class="a" style="left:442px;top:141px;width:4px;height:598px;background:#a9c7ef"></div>
<div class="a" style="left:446px;top:141px;width:1px;height:598px;background:#6f94c8"></div>
<!-- outline -->
<div id="outline" style="font-family:'DejaVu Sans Condensed','DejaVu Sans',sans-serif;color:#000">
<div class="t" style="left:2.500px;top:165px;font-size:9px">1</div>
<div class="t" style="left:2.500px;top:181px;font-size:9px">2</div>
<div class="t" style="left:2.500px;top:230px;font-size:9px">3</div>
<div class="t" style="left:2.500px;top:246px;font-size:9px">4</div>
<div class="sic" style="top:163px"></div><div class="sic sel" style="top:179px"></div><div class="sic" style="top:228px"></div><div class="sic" style="top:244px"></div>
<div class="t" style="left:34px;top:164px;font-size:13px;font-weight:bold;line-height:16px;height:16px">Tema 1</div>
<div class="t" style="left:34px;top:180px;font-size:13px;font-weight:bold;line-height:16px;height:16px">Título 1</div>
<div class="t" style="left:33.500px;top:197px;font-size:12.300px;line-height:16px;height:16px">•</div>
<div class="t" style="left:46px;top:197px;font-size:12.300px;line-height:16px;height:16px;word-spacing:2px">Subtítulo 1</div>
<div class="t" style="left:33.500px;top:213px;font-size:12.300px;line-height:16px;height:16px">•</div>
<div class="t" style="left:46px;top:213px;font-size:12.300px;line-height:16px;height:16px;word-spacing:2px">Subtítulo 2</div>
<div class="t" style="left:34px;top:229px;font-size:13px;font-weight:bold;line-height:16px;height:16px">Título 2</div>
<div class="t" style="left:34px;top:245px;font-size:13px;font-weight:bold;line-height:16px;height:16px">Tema 2</div>
</div>
<!-- stage -->
<div class="a" id="stage"></div>
<div class="a" id="slide"></div>
<div class="t" style="left:797px;top:200px;font-size:34px;line-height:40px;height:40px;color:#000;letter-spacing:.35px">Título 1</div>
<div class="a" style="left:580px;top:288px;width:7px;height:7px;border-radius:50%;background:#000"></div>
<div class="t" style="left:602px;top:276px;font-size:25px;line-height:30px;height:30px;color:#000;letter-spacing:.15px">Subtítulo 1</div>
<div class="a" style="left:580px;top:329px;width:7px;height:7px;border-radius:50%;background:#000"></div>
<div class="t" style="left:602px;top:317px;font-size:25px;line-height:30px;height:30px;color:#000;letter-spacing:.15px">Subtítulo 2</div>
<!-- right scrollbar (stage) -->
<div class="a" style="left:1264px;top:141px;width:1px;height:598px;background:#a3bde4"></div>
<div class="a" style="left:1265px;top:141px;width:15px;height:511px;background:linear-gradient(90deg,#7195c6,#87a4cf)"></div>
<div class="a" style="left:1267px;top:146px;width:0;height:0;border-left:5px solid transparent;border-right:5px solid transparent;border-bottom:5px solid #5a6e98"></div>
<div class="a" style="left:1266px;top:279px;width:13px;height:106px;border:1px solid #6f8cba;border-radius:2px;box-sizing:border-box;background:linear-gradient(90deg,#f4f6f9,#e3e7ee 50%,#d2d8e2)"></div>
<div class="a" style="left:1269px;top:328px;width:7px;height:1px;background:#7f8fa8;box-shadow:0 2px 0 #7f8fa8,0 4px 0 #7f8fa8,0 6px 0 #7f8fa8"></div>
<div class="a" style="left:1265px;top:604px;width:15px;height:48px;background:#abc8f1;border-top:1px solid #dfeafa;box-sizing:border-box"></div>
<div class="a" style="left:1267px;top:593px;width:0;height:0;border-left:5px solid transparent;border-right:5px solid transparent;border-top:5px solid #5a6e98"></div>
<svg style="left:1268px;top:609px" width="9" height="25" viewBox="0 0 9 25" fill="#111"><path d="M4.500 0l4.500 4.500h-9zM4.500 4.500l4.500 4.500h-9zM0 16h9l-4.500 4.500zM0 20.500h9l-4.500 4.500z"/></svg>
<!-- splitter h -->
<div class="a" style="left:447px;top:652px;width:833px;height:5px;background:linear-gradient(180deg,#9dbdea,#c4dcfb 60%,#a9c7ef)"></div>
<div class="a" style="left:447px;top:657px;width:833px;height:1px;background:#6f94c8"></div>
<div class="a" id="notes"></div>
<div class="t" style="left:457px;top:664px;font:15.500px/18px 'DejaVu Sans Condensed','DejaVu Sans',sans-serif;height:18px;color:#000">Haga clic para agregar notas</div>
<div class="a" style="left:1265px;top:658px;width:15px;height:81px;background:linear-gradient(90deg,#7195c6,#87a4cf)"></div>
<div class="a" style="left:1267px;top:663px;width:0;height:0;border-left:5px solid transparent;border-right:5px solid transparent;border-bottom:5px solid #6a7ea8"></div>
<div class="a" style="left:1267px;top:728px;width:0;height:0;border-left:5px solid transparent;border-right:5px solid transparent;border-top:5px solid #6a7ea8"></div>
<!-- status bar -->
<div class="a" id="status"></div>
<div class="a" style="left:0;top:738px;width:1280px;height:1px;background:#567db1"></div>
<div class="a" style="left:0;top:739px;width:1280px;height:1px;background:#f2f8ff"></div>
<div class="a" style="left:1016px;top:740px;width:264px;height:20px;background:linear-gradient(180deg,#bed4f4 0,#aec8ee 8px,#99b8e6 9px,#b8cff1 20px)"></div>
<div class="a" style="left:1015px;top:740px;width:1px;height:20px;background:#7f9fd0"></div>
<div class="r" style="left:8px;top:742px;font-size:11.500px">Diapositiva 2 de 4</div>
<div class="a" style="left:107px;top:741px;width:1px;height:19px;background:#8db2e3;box-shadow:1px 0 0 #f2f8ff"></div>
<div class="r" style="left:117px;top:742px;font-size:11.500px">"Tema de Office"</div>
<div class="a" style="left:209px;top:741px;width:1px;height:19px;background:#8db2e3;box-shadow:1px 0 0 #f2f8ff"></div>
<svg style="left:218px;top:741px" width="18" height="16" viewBox="0 0 18 16"><path d="M1 10l4-4 8 3-4 5z" fill="#f4f6fa" stroke="#6a7a9a" stroke-width=".8"/><path d="M1 10v2l8 4v-2" fill="#c8d0e0" stroke="#6a7a9a" stroke-width=".8"/><path d="M9 14l4-5v2l-4 5" fill="#aab4c8" stroke="#6a7a9a" stroke-width=".6"/><path d="M8 6l3 3 5-8" fill="none" stroke="#2f5fd0" stroke-width="1.800"/></svg>
<div class="r" style="left:251px;top:742px;font-size:11.500px;letter-spacing:-.06px">Español (España, internacional)</div>
<div class="a" style="left:420px;top:741px;width:1px;height:19px;background:#8db2e3;box-shadow:1px 0 0 #f2f8ff"></div>
<div class="a" style="left:1022px;top:740px;width:54px;height:17px;border:1px solid #8fb0e0;border-radius:2px;background:linear-gradient(180deg,#d6e5f8 0,#c4d8f2 8px,#b2cbee 9px,#cfe0f6 17px)"></div>
<div class="a" style="left:1040px;top:741px;width:1px;height:17px;background:#9cb9e4"></div><div class="a" style="left:1058px;top:741px;width:1px;height:17px;background:#9cb9e4"></div>
<svg style="left:1026px;top:743px" width="11" height="11" viewBox="0 0 11 11"><rect x=".75" y=".75" width="9.500" height="9.500" fill="#fff" stroke="#333" stroke-width="1.500"/><path d="M4 1v9M4 6h6" stroke="#333" stroke-width="1.500"/></svg>
<svg style="left:1044px;top:743px" width="11" height="11" viewBox="0 0 11 11"><path d="M.5 1h4v3h-4zM6.500 1h4v3h-4zM.5 7h4v3h-4zM6.500 7h4v3h-4z" fill="#fff" stroke="#333"/></svg>
<svg style="left:1062px;top:742px" width="12" height="13" viewBox="0 0 12 13"><path d="M0 1.500h12" stroke="#333" stroke-width="1.500"/><rect x="1.500" y="2.500" width="9" height="5" fill="#fff" stroke="#333"/><path d="M6 8v3.500M3 12h6" stroke="#333" stroke-width="1.300"/></svg>
<div class="r" style="left:1086px;top:742px;font-size:11.500px;letter-spacing:-.4px">66%</div>
<div class="a" style="left:1132px;top:749px;width:102px;height:1px;background:#6a7fa8;box-shadow:0 1px 0 #e6effb"></div>
<div class="a" style="left:1184px;top:745px;width:1px;height:9px;background:#6a7fa8;box-shadow:1px 0 0 #e6effb"></div>
<div class="a" style="left:1116px;top:741px;width:15px;height:15px;border-radius:50%;border:1px solid #6a7ea8;box-sizing:border-box;background:radial-gradient(circle at 50% 30%,#fff,#dfe6f2 60%,#b8c6e0);box-shadow:0 0 0 1px rgba(255,255,255,.5)"></div>
<div class="a" style="left:1120px;top:748px;width:7px;height:2px;background:#4a4f5c"></div>
<div class="a" style="left:1234px;top:741px;width:15px;height:15px;border-radius:50%;border:1px solid #6a7ea8;box-sizing:border-box;background:radial-gradient(circle at 50% 30%,#fff,#dfe6f2 60%,#b8c6e0);box-shadow:0 0 0 1px rgba(255,255,255,.5)"></div>
<div class="a" style="left:1238px;top:748px;width:7px;height:2px;background:#4a4f5c"></div><div class="a" style="left:1240.500px;top:745px;width:2px;height:7px;background:#4a4f5c"></div>
<svg style="left:1161px;top:742px" width="10" height="14" viewBox="0 0 10 14"><path d="M.5 .5h9v8l-4.500 5-4.500-5z" fill="#eef2f8" stroke="#5a6a8c"/><path d="M5 3v5" stroke="#7f8fb0"/></svg>
<svg style="left:1259px;top:742px" width="15" height="15" viewBox="0 0 15 15"><rect x=".5" y=".5" width="14" height="14" fill="#f6f8fb" stroke="#7f8fa8"/><path d="M7.500 1v4M7.500 10v4M1 7.500h4M10 7.500h4" stroke="#333" stroke-dasharray="1 1"/><path d="M6 4l1.500-2 1.500 2zM6 11l1.500 2 1.500-2zM4 6l-2 1.500 2 1.500zM11 6l2 1.500-2 1.500z" fill="#333"/></svg>
<!-- mini toolbar -->
<div class="a" style="left:130px;top:153px;width:236px;height:47px;border:1px solid #a3afc4;border-radius:3px;background:linear-gradient(180deg,#fdfeff 0,#f1f5fb 50%,#dfe8f5 100%);box-shadow:2px 2px 3px rgba(0,0,0,.35)"></div>
<div class="a" style="left:132px;top:154px;width:59px;height:20px;border:1px solid #b6cbe8;background:#eaf2fb"></div>
<div class="a" style="left:135px;top:157px;width:43px;height:14px;overflow:hidden"><div class="r" style="left:0;top:0;color:#000;letter-spacing:-.15px">Calibri (Cuerpo)</div></div>
<div class="dd" style="left:181px;top:164px"></div>
<div class="a" style="left:192px;top:154px;width:38px;height:20px;border:1px solid #b6cbe8;background:#eaf2fb"></div>
<div class="r" style="left:195px;top:157px;color:#000">32</div><div class="dd" style="left:221px;top:164px"></div>
<div class="r" style="left:235px;top:157px;font:bold 16.500px/18px 'Liberation Serif',serif;color:#222;height:18px">A</div>
<div class="a" style="left:244px;top:158px;width:0;height:0;border-left:3px solid transparent;border-right:3px solid transparent;border-bottom:3px solid #3a62b0"></div>
<div class="r" style="left:258.500px;top:160px;font:bold 12px/14px 'Liberation Serif',serif;color:#222">A</div>
<div class="a" style="left:265px;top:159px;width:0;height:0;border-left:3px solid transparent;border-right:3px solid transparent;border-top:3px solid #3a62b0"></div>
<svg style="left:279px;top:156px" width="18" height="18" viewBox="0 0 18 18"><path d="M6 3l7.500 5.500-5 5.500-7-5z" fill="#f6f8fc" stroke="#9aa8c4"/><path d="M5.500 1c-1.500 1-1.500 3.500 0 5" fill="none" stroke="#9aa8c4"/><path d="M14 8.500c1.500 1.500 2.500 4 1 5.500-1.500-.5-2-3-1-5.500z" fill="#a8c0e8"/><rect x="0" y="15" width="16" height="3" fill="#d4e2f6"/></svg>
<div class="dd g" style="left:301px;top:164px"></div>
<svg style="left:312px;top:156px" width="18" height="18" viewBox="0 0 18 18"><path d="M1.500 11.500v-8h10" fill="none" stroke="#9aa8c4"/><path d="M14 1l2 2-8 8-3 1 1-3z" fill="#e4e8f0" stroke="#8a96b0" stroke-width=".8"/><path d="M1 12.500h9" stroke="#9aa8c4"/><rect x="0" y="14" width="16" height="4" fill="#7f97bd"/></svg>
<div class="dd g" style="left:335px;top:164px"></div>
<svg style="left:346px;top:156px" width="18" height="18" viewBox="0 0 18 18"><path d="M10 5l4-4 2.500 2.500-4 4z" fill="#5c5aa8" stroke="#3c3a80" stroke-width=".6"/><path d="M8.500 6l3.500 3.500-1.500 1.500-3.500-3.500z" fill="#c8c8d0" stroke="#777" stroke-width=".5"/><path d="M7 7.500l3.500 3.500c-1 3-3 5.500-5.500 6.500l-4.500-6.500c2.500-.5 5-1.500 6.500-3.500z" fill="#f0d878" stroke="#b89a30" stroke-width=".7"/></svg>
<div class="r" style="left:137px;top:183px;font:bold 12px/15px 'Liberation Serif',serif;color:#000;height:15px;-webkit-text-stroke:.7px #000">N</div>
<div class="r" style="left:159px;top:183px;font:italic bold 12.500px/15px 'Liberation Serif',serif;color:#000;height:15px;-webkit-text-stroke:.3px #000">K</div>
<div class="hot" style="left:175px;top:179px;width:20px;border-radius:3px"></div>
<div class="lines" style="left:179px;top:184px"><b></b><b style="width:10px"></b><b></b><b style="width:10px"></b><b></b><b style="width:10px"></b></div>
<div class="lines" style="left:201px;top:184px"><b></b><b style="width:10px;margin-left:2px"></b><b></b><b style="width:10px;margin-left:2px"></b><b></b><b style="width:10px;margin-left:2px"></b></div>
<div class="lines" style="left:223px;top:184px"><b></b><b style="width:10px;margin-left:4px"></b><b></b><b style="width:10px;margin-left:4px"></b><b></b><b style="width:10px;margin-left:4px"></b></div>
<div class="r" style="left:246.500px;top:179px;font:bold 15.500px/17px 'Liberation Serif',serif;color:#2f4f9f;height:17px">A</div>
<div class="a" style="left:244px;top:194px;width:16px;height:4px;background:#f00c12"></div>
<div class="dd" style="left:265px;top:188px"></div>
<svg style="left:278px;top:182px" width="17" height="15" viewBox="0 0 17 15"><path d="M2 2.500h14M2 10.500h14M2 12.500h6" stroke="#111" stroke-width="1"/><path d="M8 5.200h8M8 8h5" stroke="#111" stroke-width="1.900"/><path d="M7.500 0v15" stroke="#111" stroke-width="1" stroke-dasharray="1 1.400"/><path d="M0 6.600l3.600-2.800v2h2.400v1.600h-2.400v2z" fill="#3a6fd8"/></svg>
<svg style="left:300px;top:182px" width="17" height="15" viewBox="0 0 17 15"><path d="M2 2.500h14M2 10.500h14M2 12.500h6" stroke="#111" stroke-width="1"/><path d="M8 5.200h8M8 8h5" stroke="#111" stroke-width="1.900"/><path d="M7.500 0v15" stroke="#111" stroke-width="1" stroke-dasharray="1 1.400"/><path d="M6 6.600l-3.600-2.800v2h-2.400v1.600h2.400v2z" fill="#3a6fd8"/></svg>
<div class="hot" style="left:319px;top:179px;width:21px"></div>
<div class="a" style="left:341px;top:179px;width:10px;height:20px;border:1px solid #c2a256;border-left:none;border-radius:0 3px 3px 0;background:linear-gradient(180deg,#fffaea,#fdf0c8 50%,#fce9b0)"></div>
<svg style="left:323px;top:182px" width="15" height="15" viewBox="0 0 15 15"><circle cx="2.500" cy="2.500" r="1.500" fill="#2f5fc0"/><circle cx="2.500" cy="7.500" r="1.500" fill="#2f5fc0"/><circle cx="2.500" cy="12.500" r="1.500" fill="#2f5fc0"/><path d="M6 2.500h8M6 7.500h8M6 12.500h8" stroke="#111" stroke-width="1.100"/></svg>
<div class="dd" style="left:343px;top:188px"></div>
<!-- context menu -->
<div class="a" id="menu"><div class="col"></div>
<div class="sep" style="top:67px"></div><div class="sep" style="top:113px"></div><div class="sep" style="top:159px"></div><div class="sep" style="top:249px"></div><div class="sep" style="top:273px"></div>
</div>
<div class="m d" style="top:224px">Cor<u>t</u>ar</div>
<div class="m d" style="top:246px"><u>C</u>opiar</div>
<div class="m" style="top:268px"><u>P</u>egar</div>
<div class="m" style="top:292px"><u>C</u>ontraer</div>
<div class="m" style="top:314px"><u>E</u>xpandir</div>
<div class="m" style="top:338px">N<u>u</u>eva diapositiva...</div>
<div class="m" style="top:360px">E<u>l</u>iminar diapositiva</div>
<div class="m" style="top:384px"><u>A</u>umentar nivel</div>
<div class="m" style="top:406px"><u>D</u>isminuir nivel</div>
<div class="m" style="top:428px"><u>S</u>ubir</div>
<div class="m" style="top:450px"><u>B</u>ajar</div>
<div class="m" style="top:474px">Hiper<u>v</u>ínculo...</div>
<div class="m" style="top:498px"><u>M</u>ostrar formato de texto</div>
<div class="m" style="top:520px"><u>S</u>inónimos</div>
<div class="a" style="left:343px;top:292px;width:1px;height:14px;background:#bab5a8"></div><div class="sub" style="top:295px"></div>
<div class="a" style="left:343px;top:314px;width:1px;height:14px;background:#bab5a8"></div><div class="sub" style="top:317px"></div>
<div class="sub" style="top:523px"></div>
<!-- menu icons -->
<svg style="left:137px;top:223px" width="11" height="16" viewBox="0 0 12 16"><path d="M3.500 .5L7 9M8.500 .5L5 9" stroke="#9aa6ba" stroke-width="1.400" fill="none"/><ellipse cx="3" cy="11.500" rx="2" ry="2.600" fill="none" stroke="#8f9fc0" stroke-width="1.300"/><ellipse cx="9" cy="11.500" rx="2" ry="2.600" fill="none" stroke="#8f9fc0" stroke-width="1.300"/></svg>
<svg style="left:135px;top:246px" width="15" height="14" viewBox="0 0 16 15"><path d="M.5 .5h5l2.500 2.500v6.500h-7.500z" fill="#f4f6fa" stroke="#a6b0c2"/><path d="M7.500 4.500h5l3 3v7h-8z" fill="#fafbfd" stroke="#a6b0c2"/><path d="M9 8h4M9 10h5M9 12h5M2 3h3M2 5h4M2 7h4" stroke="#c2cad8" stroke-width=".8"/></svg>
<svg style="left:135px;top:267px" width="16" height="16" viewBox="0 0 16 16"><rect x=".5" y="2.500" width="12" height="13" rx="1" fill="#e8b448" stroke="#8a6a20"/><rect x="3.500" y=".5" width="6" height="3.500" rx="1" fill="#e8e8e8" stroke="#666"/><path d="M6.500 7.500h6l3 3v5h-9z" fill="#fff" stroke="#55607a"/><path d="M8 11h5M8 13h5" stroke="#8a94aa" stroke-width=".8"/></svg>
<div class="a" style="left:138px;top:297px;width:9px;height:3px;background:#3f7fe0;border:1px solid #2a58b0;box-sizing:border-box;border-radius:1px"></div>
<svg style="left:138px;top:316px" width="9" height="9" viewBox="0 0 9 9"><path d="M3.300 .3h2.400v3h3v2.400h-3v3h-2.400v-3h-3v-2.400h3z" fill="#4a8cf0" stroke="#2a58b0" stroke-width=".7"/></svg>
<svg style="left:135px;top:338px" width="16" height="14" viewBox="0 0 16 14"><rect x="4.500" y="4.500" width="11" height="9" rx="1" fill="#fbfcfe" stroke="#55607a"/><rect x="7" y="7" width="6" height="2" fill="#c4cad8"/><path d="M3.500 0v7M0 3.500h7M1 1l5 5M6 1L1 6" stroke="#f4cc1c" stroke-width="1.200"/></svg>
<svg style="left:135px;top:360px" width="16" height="14" viewBox="0 0 16 14"><rect x="4.500" y=".5" width="11" height="9" fill="#fbfcfe" stroke="#55607a"/><rect x="6.500" y="2.500" width="7" height="2.500" fill="#c4cad8"/><path d="M1 7l6 6M7 7l-6 6" stroke="#e03a1c" stroke-width="2"/></svg>
<svg style="left:137px;top:386px" width="11" height="10" viewBox="0 0 11 10"><path d="M.5 5l5-4.500v2.800h5v3.400h-5v2.800z" fill="#6dbb3c" stroke="#3f7f22" stroke-width=".8"/></svg>
<svg style="left:137px;top:408px" width="11" height="10" viewBox="0 0 11 10"><path d="M10.500 5l-5-4.500v2.800h-5v3.400h5v2.800z" fill="#6dbb3c" stroke="#3f7f22" stroke-width=".8"/></svg>
<svg style="left:138px;top:429px" width="10" height="11" viewBox="0 0 10 11"><path d="M5 .5l4.500 5h-2.800v5h-3.400v-5h-2.800z" fill="#3f7fe0" stroke="#2a58b0" stroke-width=".8"/></svg>
<svg style="left:138px;top:451px" width="10" height="11" viewBox="0 0 10 11"><path d="M5 10.500l4.500-5h-2.800v-5h-3.400v5h-2.800z" fill="#3f7fe0" stroke="#2a58b0" stroke-width=".8"/></svg>
<svg style="left:134px;top:472px" width="17" height="18" viewBox="0 0 17 18"><circle cx="8" cy="7" r="6" fill="#4a9ad8" stroke="#2a5a98" stroke-width=".8"/><path d="M4 4c2-2 5-1 6 0 1 2-1 3-2 4s-2 3-4 1-1-4 0-5z" fill="#5ab840"/><path d="M3 13.500a2 2 0 0 1 2-2h2.500a2 2 0 0 1 0 4h-2.500a2 2 0 0 1-2-2zM9 13.500a2 2 0 0 1 2-2h2.500a2 2 0 0 1 0 4h-2.500a2 2 0 0 1-2-2z" fill="#e8e8ec" stroke="#4a4a58"/><path d="M6 13.500h6" stroke="#4a4a58" stroke-width="1.300"/></svg>
<svg style="left:134px;top:497px" width="18" height="16" viewBox="0 0 18 16"><text x="0" y="8" font-size="8" font-family="Liberation Sans, sans-serif" fill="#222">A</text><path d="M12 1l-8 13" stroke="#222" stroke-width="1.100"/><text x="7.500" y="14.500" font-size="12" font-weight="bold" font-style="italic" font-family="Liberation Serif, serif" fill="#1f3f9f">A</text><path d="M6 15.500h11" stroke="#1f3f9f" stroke-width="1.200"/></svg>
</body>
</html>
